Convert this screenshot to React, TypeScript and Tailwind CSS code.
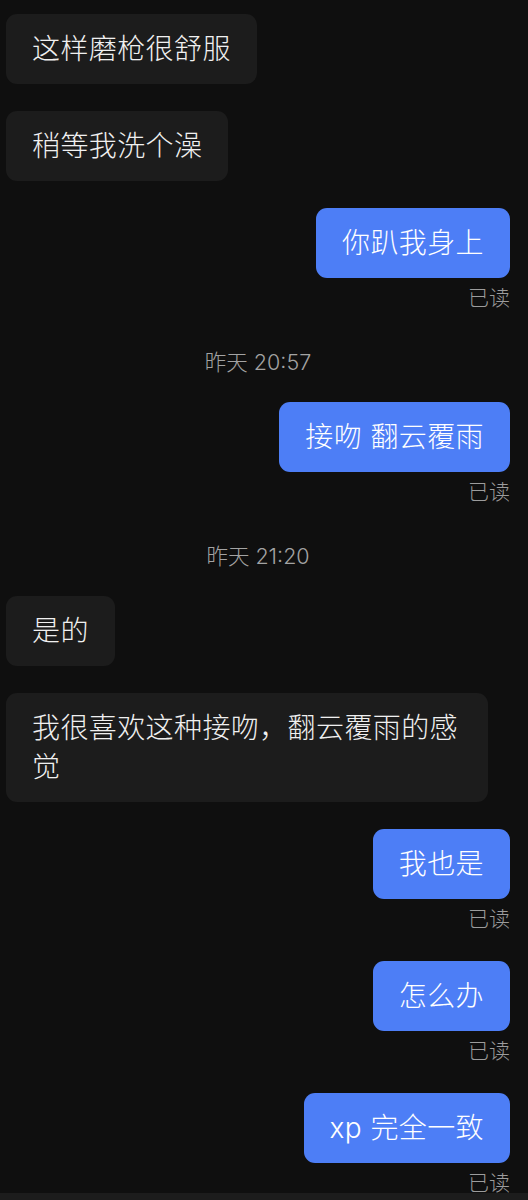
const font = { fontFamily: 'Inter, "Noto Sans CJK SC", "Noto Sans", sans-serif' }

type Item =
  | { kind: 'in' | 'out'; text: string; mt: string; read?: boolean }
  | { kind: 'time'; text: string }

const items: Item[] = [
  { kind: 'in', text: '这样磨枪很舒服', mt: 'mt-0' },
  { kind: 'in', text: '稍等我洗个澡', mt: 'mt-[27px]' },
  { kind: 'out', text: '你趴我身上', mt: 'mt-[27px]', read: true },
  { kind: 'time', text: '昨天 20:57' },
  { kind: 'out', text: '接吻 翻云覆雨', mt: 'mt-0', read: true },
  { kind: 'time', text: '昨天 21:20' },
  { kind: 'in', text: '是的', mt: 'mt-0' },
  { kind: 'in', text: '我很喜欢这种接吻，翻云覆雨的感觉', mt: 'mt-[27px]' },
  { kind: 'out', text: '我也是', mt: 'mt-[27px]', read: true },
  { kind: 'out', text: '怎么办', mt: 'mt-[22px]', read: true },
  { kind: 'out', text: 'xp 完全一致', mt: 'mt-[22px]', read: true },
]

export default function App() {
  return (
    <div className="w-[528px] h-[1200px] overflow-hidden bg-[#0f0f0f] flex flex-col" style={font}>
      <div className="flex-1 flex flex-col pt-[14px] pr-[18px] pl-[6px]">
        {items.map((m, i) => {
          if (m.kind === 'time') {
            return (
              <div key={i} className="h-[84px] pt-[4px] flex items-center justify-center text-[21.5px] font-light text-[#a3a3a3]">
                {m.text}
              </div>
            )
          }
          const last = i === items.length - 1
          return (
            <div key={i} className={`flex flex-col ${m.mt} ${m.kind === 'out' ? 'items-end' : 'items-start'}`}>
              <div
                className={`max-w-[482px] rounded-[11px] px-[26px] pt-[16px] pb-[15px] text-[28px] tracking-[0.4px] leading-[39px] font-light ${
                  m.kind === 'out' ? 'bg-[#4d7ef6] text-white' : 'bg-[#1c1c1c] text-[#f0f0f0]'
                }`}
              >
                {m.text}
              </div>
              {m.read && (
                <div className={`${last ? 'h-[30px]' : 'h-[40px]'} leading-[40px] text-[21px] font-light text-[#9c9c9c]`}>已读</div>
              )}
            </div>
          )
        })}
      </div>
      <div className="h-[7px] bg-[#1c1c1c]" />
    </div>
  )
}
